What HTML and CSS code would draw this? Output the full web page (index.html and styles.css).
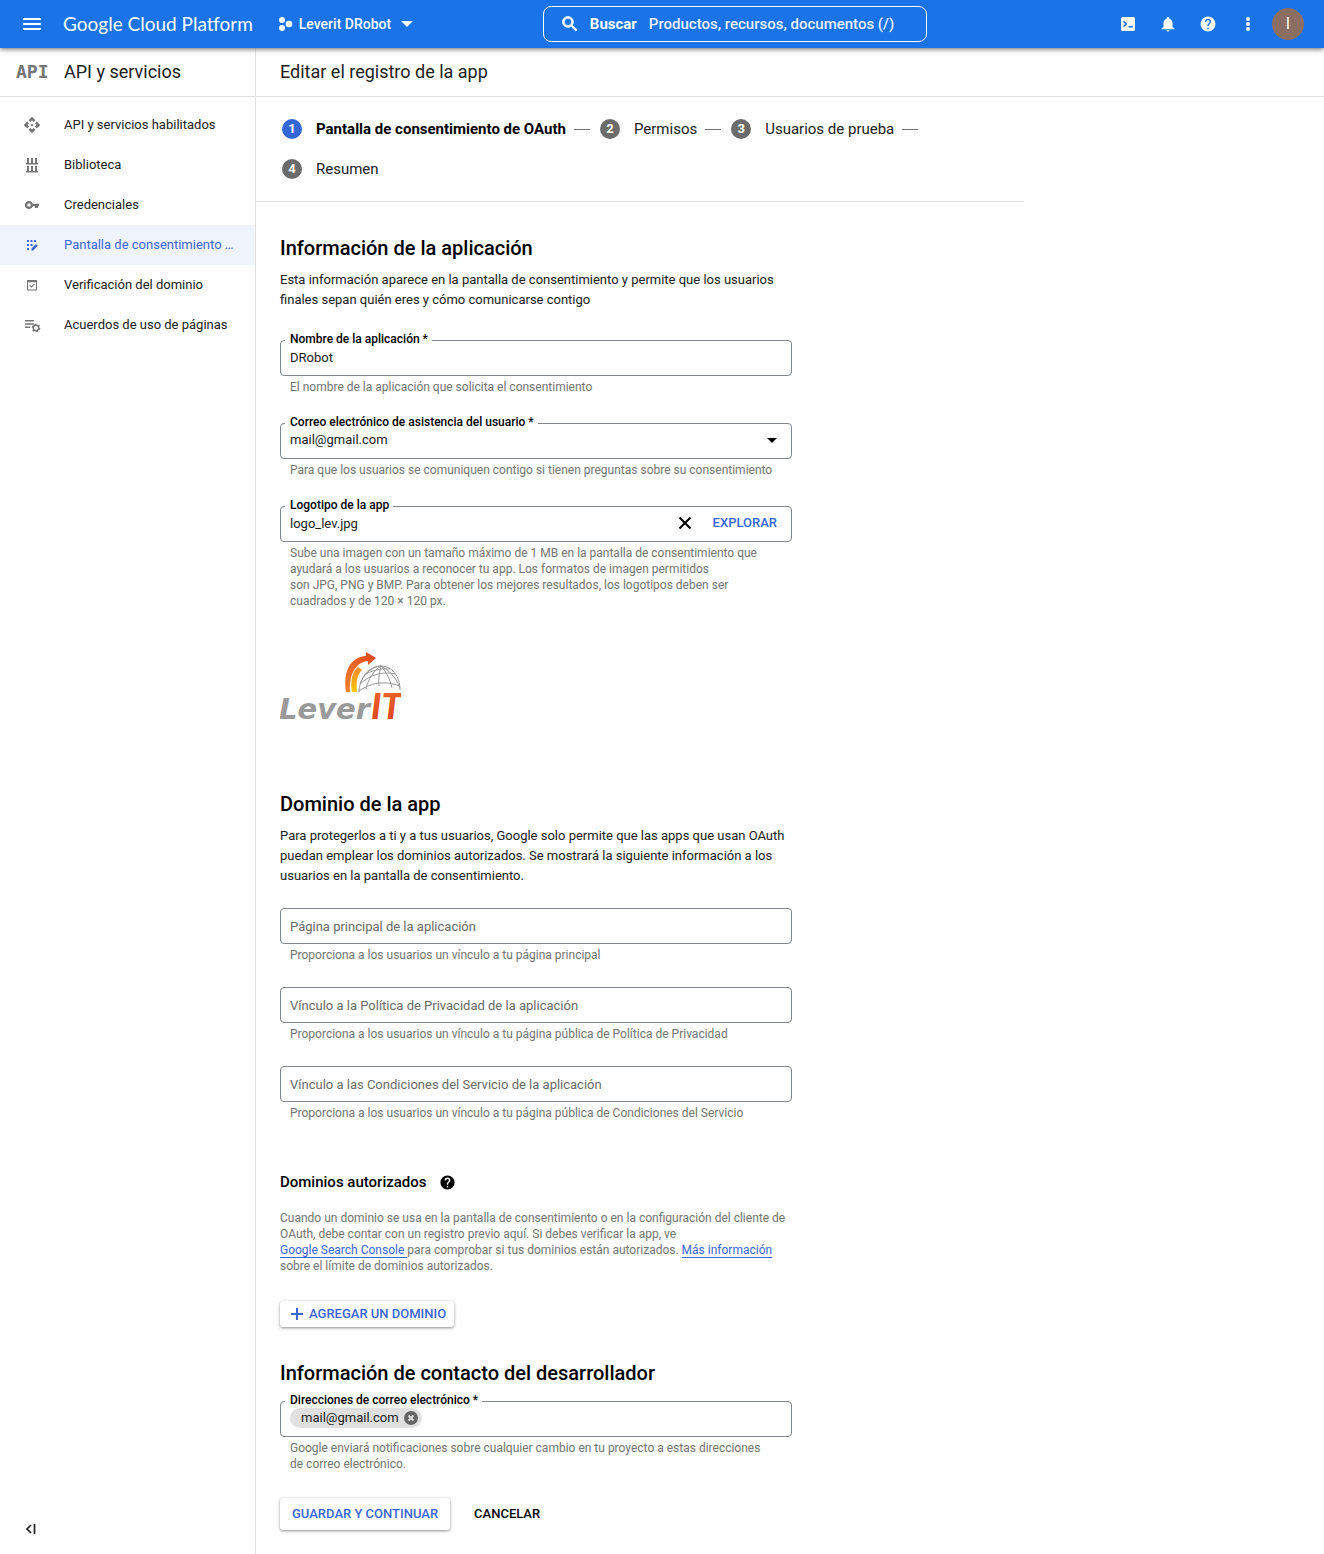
FILE: index.html
```html
<!DOCTYPE html>
<html lang="es">
<head>
    <meta charset="UTF-8">
    <meta name="viewport" content="width=device-width, initial-scale=1.0">
    <title>Editar el registro de la app - API y servicios</title>
    <link rel="stylesheet" href="styles.css">
</head>
<body>
    <header class="topbar">
        <div class="topbar-left">
            <button class="icon-btn menu-btn" aria-label="Menú">
                <svg width="24" height="24" viewBox="0 0 24 24"><path d="M3 18h18v-2H3v2zm0-5h18v-2H3v2zm0-7v2h18V6H3z"/></svg>
            </button>
            <a class="brand" href="#">Google Cloud Platform</a>
            <button class="project">
                <svg width="14" height="16" viewBox="0 0 14 16"><circle cx="3" cy="4" r="3"/><circle cx="3" cy="12" r="3"/><circle cx="10" cy="8" r="3.300"/></svg>
                Leverit DRobot
                <svg class="caret" width="12" height="6" viewBox="0 0 12 6"><path d="M0 0h12L6 6z"/></svg>
            </button>
        </div>
        <label class="search">
            <svg width="20" height="20" viewBox="0 0 24 24"><path stroke="currentColor" d="M15.500 14h-.79l-.28-.27A6.470 6.470 0 0 0 16 9.500 6.500 6.500 0 1 0 9.500 16c1.610 0 3.090-.59 4.230-1.570l.27.28v.79l5 4.990L20.490 19l-4.990-5zm-6 0a4.500 4.500 0 1 1 0-9 4.500 4.500 0 0 1 0 9z"/></svg>
            <span>Buscar</span>
            <input type="text" placeholder="Productos, recursos, documentos (/)">
        </label>
        <div class="topbar-right">
            <button class="icon-btn" aria-label="Cloud Shell">
                <svg width="18" height="18" viewBox="0 0 18 18"><path fill-rule="evenodd" d="M3.500 2h11A1.500 1.500 0 0 1 16 3.500v11a1.500 1.500 0 0 1-1.500 1.500h-11A1.500 1.500 0 0 1 2 14.500v-11A1.500 1.500 0 0 1 3.500 2zM3.500 6.300 6 9l-2.500 2.700h2.200L8.300 9 5.700 6.300zM9.500 11v1.600H14V11z"/></svg>
            </button>
            <button class="icon-btn" aria-label="Notificaciones">
                <svg width="18" height="18" viewBox="0 0 24 24"><path d="M12 22c1.100 0 2-.9 2-2h-4c0 1.100.9 2 2 2zm6-6v-5c0-3.070-1.640-5.640-4.500-6.320V4a1.500 1.500 0 0 0-3 0v.68C7.630 5.360 6 7.920 6 11v5l-2.500 2v1h17v-1z"/></svg>
            </button>
            <button class="icon-btn" aria-label="Ayuda">
                <svg width="18" height="18" viewBox="0 0 24 24"><path d="M12 2a10 10 0 1 0 0 20 10 10 0 0 0 0-20zm1 17h-2v-2h2v2zm2.070-7.750-.9.920C13.450 12.900 13 13.500 13 15h-2v-.5c0-1.100.45-2.100 1.170-2.830l1.240-1.260A2 2 0 1 0 10 9H8a4 4 0 1 1 8 0c0 .88-.36 1.680-.93 2.250z"/></svg>
            </button>
            <button class="icon-btn" aria-label="Más opciones">
                <svg width="18" height="18" viewBox="0 0 18 18"><circle cx="9" cy="4" r="2"/><circle cx="9" cy="9" r="2"/><circle cx="9" cy="14" r="2"/></svg>
            </button>
            <button class="avatar" aria-label="Cuenta">I</button>
        </div>
    </header>

    <div class="layout">
        <aside class="sidebar">
            <div class="sidebar-title"><span class="api-logo">API</span>API y servicios</div>
            <nav>
                <a class="nav-item" href="#">
                    <svg width="18" height="18" viewBox="0 0 24 24"><path d="m14 12-2 2-2-2 2-2 2 2zm-2-6 2.120 2.120 2.500-2.500L12 1 7.380 5.620l2.500 2.500L12 6zm-6 6 2.120-2.120-2.500-2.500L1 12l4.620 4.620 2.500-2.500L6 12zm12 0-2.120 2.120 2.500 2.500L23 12l-4.620-4.620-2.500 2.500L18 12zm-6 6-2.120-2.120-2.500 2.500L12 23l4.620-4.620-2.500-2.500L12 18z"/></svg>
                    <span>API y servicios habilitados</span>
                </a>
                <a class="nav-item" href="#">
                    <svg width="18" height="18" viewBox="0 0 18 18"><path d="M4 2h2v5h2V2h2v5h2V2h2v5h1v1.500H3V7h1zM4 10h2v5h2v-5h2v5h2v-5h2v5h1v1.500H3V15h1z"/></svg>
                    <span>Biblioteca</span>
                </a>
                <a class="nav-item" href="#">
                    <svg width="18" height="18" viewBox="0 0 18 18"><path fill-rule="evenodd" d="M6 5a4 4 0 1 0 3.800 5.200H12V12h3v-1.800h1V7.800H9.800A4 4 0 0 0 6 5zm0 2.200a1.800 1.800 0 1 1 0 3.600 1.800 1.800 0 0 1 0-3.600z"/></svg>
                    <span>Credenciales</span>
                </a>
                <a class="nav-item active" href="#">
                    <svg width="18" height="18" viewBox="0 0 18 18"><path d="M4 4h2v2H4zM7.500 4h2v2h-2zM11 4h2v2h-2zM4 8h2v2H4zM7.500 8h2v2h-2zM4 12h2v2H4zM8.500 14.500v-2L13 8l1.800 1.800-4.600 4.700z"/></svg>
                    <span>Pantalla de consentimiento de OAuth</span>
                </a>
                <a class="nav-item" href="#">
                    <svg width="18" height="18" viewBox="0 0 18 18"><path fill-rule="evenodd" d="M4 4h10v10.500H4zM5 6.200v7.300h8V6.200zM6.300 9.700l.8-.8 1.300 1.300L11 7.600l.8.800-3.400 3.400z"/></svg>
                    <span>Verificación del dominio</span>
                </a>
                <a class="nav-item" href="#">
                    <svg width="18" height="18" viewBox="0 0 18 18"><path d="M2 4h9v1.500H2zM2 7.300h9v1.500H2zM2 10.600h5v1.500H2z"/><circle cx="13" cy="12" r="2.700" fill="none" stroke="currentColor" stroke-width="1.400"/><circle cx="13" cy="12" r="3.700" fill="none" stroke="currentColor" stroke-width="1.200" stroke-dasharray="1.900 1.970"/></svg>
                    <span>Acuerdos de uso de páginas</span>
                </a>
            </nav>
            <button class="collapse" aria-label="Ocultar panel">
                <svg width="12" height="10" viewBox="0 0 12 10"><path d="M6 1 2 5l4 4M9.500 0v10" fill="none" stroke="currentColor" stroke-width="1.700"/></svg>
            </button>
        </aside>

        <main>
            <h1>Editar el registro de la app</h1>
            <ol class="steps">
                <li class="current"><span class="num">1</span>Pantalla de consentimiento de OAuth</li>
                <li><span class="num">2</span>Permisos</li>
                <li><span class="num">3</span>Usuarios de prueba</li>
                <li><span class="num">4</span>Resumen</li>
            </ol>

            <form class="form">
                <section>
                    <h2>Información de la aplicación</h2>
                    <p>Esta información aparece en la pantalla de consentimiento y permite que los usuarios finales sepan quién eres y cómo comunicarse contigo</p>
                    <div class="fields">
                        <div class="field">
                            <label for="app-name">Nombre de la aplicación *</label>
                            <div class="box"><input id="app-name" type="text" value="DRobot"></div>
                            <div class="hint">El nombre de la aplicación que solicita el consentimiento</div>
                        </div>
                        <div class="field">
                            <label for="support">Correo electrónico de asistencia del usuario *</label>
                            <div class="box">
                                <select id="support"><option>mail@gmail.com</option></select>
                                <svg class="arrow" width="10" height="5" viewBox="0 0 10 5"><path d="M0 0h10L5 5z"/></svg>
                            </div>
                            <div class="hint">Para que los usuarios se comuniquen contigo si tienen preguntas sobre su consentimiento</div>
                        </div>
                        <div class="field">
                            <label for="logo">Logotipo de la app</label>
                            <div class="box">
                                <input id="logo" type="text" value="logo_lev.jpg" readonly>
                                <button type="button" class="clear" aria-label="Quitar">
                                    <svg width="14" height="14" viewBox="0 0 14 14"><path d="m1.500 1.500 11 11m0-11-11 11" stroke="currentColor" stroke-width="2"/></svg>
                                </button>
                                <button type="button" class="browse">EXPLORAR</button>
                            </div>
                            <div class="hint">Sube una imagen con un tamaño máximo de 1 MB en la pantalla de consentimiento que ayudará a los usuarios a reconocer tu app. Los formatos de imagen permitidos son&nbsp;JPG,&nbsp;PNG&nbsp;y&nbsp;BMP. Para obtener los mejores resultados, los logotipos deben ser cuadrados y de 120 × 120 px.</div>
                        </div>
                    </div>
                    <svg class="logo" width="121" height="120" viewBox="0 0 121 120" role="img" aria-label="LeverIT">
                        <defs>
                            <linearGradient id="flame" x1="0" y1="1" x2="1" y2="0"><stop offset="0" stop-color="#f0822a"/><stop offset="1" stop-color="#e0451f"/></linearGradient>
                            <linearGradient id="sun" x1="0" y1="1" x2="0" y2="0"><stop offset="0" stop-color="#fdc60b"/><stop offset="1" stop-color="#f2882b"/></linearGradient>
                            <linearGradient id="it" x1="0" y1="0" x2="0" y2="1"><stop offset="0" stop-color="#f06a28"/><stop offset="1" stop-color="#dc3f20"/></linearGradient>
                        </defs>
                        <path d="M66 66C63 46 70 31 86 30l0-4 10 6-8 7v-4C76 36 69 48 70 66z" fill="url(#flame)"/>
                        <path d="M72 66c-2-11 0-20 6-25l4 3c-5 5-6 12-5 22z" fill="url(#sun)"/>
                        <g fill="none" stroke="#999" stroke-width="1">
                            <path d="M79 66c0-11 8-26 22-26 11 0 19 10 19 24"/>
                            <path d="M80 58c10-9 21-13 36-10M79 65c11-8 25-11 41-5M84 49c7-4 16-7 26-6"/>
                            <path d="M101 40c-8 5-13 14-15 23M101 40c-2 8-3 15-2 20M101 40c6 7 9 13 11 22M101 40c8 4 14 10 19 22M101 40c-10 1-17 8-21 18"/>
                        </g>
                        <text class="logo-lever" x="-1" y="93">Lever</text>
                        <text class="logo-it" x="91" y="93" fill="url(#it)">IT</text>
                    </svg>
                </section>

                <section class="domain">
                    <h2>Dominio de la app</h2>
                    <p>Para protegerlos a ti y a tus usuarios, Google solo permite que las apps que usan OAuth puedan emplear los dominios autorizados. Se mostrará la siguiente información a los usuarios en la pantalla de consentimiento.</p>
                    <div class="fields links">
                        <div class="field">
                            <div class="box"><input type="text" aria-label="Página principal" placeholder="Página principal de la aplicación"></div>
                            <div class="hint">Proporciona a los usuarios un vínculo a tu página principal</div>
                        </div>
                        <div class="field">
                            <div class="box"><input type="text" aria-label="Política de Privacidad" placeholder="Vínculo a la Política de Privacidad de la aplicación"></div>
                            <div class="hint">Proporciona a los usuarios un vínculo a tu página pública de Política de Privacidad</div>
                        </div>
                        <div class="field">
                            <div class="box"><input type="text" aria-label="Condiciones del Servicio" placeholder="Vínculo a las Condiciones del Servicio de la aplicación"></div>
                            <div class="hint">Proporciona a los usuarios un vínculo a tu página pública de Condiciones del Servicio</div>
                        </div>
                    </div>
                </section>

                <section class="authorized">
                    <h3>Dominios autorizados
                        <svg width="17" height="17" viewBox="0 0 24 24"><path d="M12 2a10 10 0 1 0 0 20 10 10 0 0 0 0-20zm1 17h-2v-2h2v2zm2.070-7.750-.9.920C13.450 12.900 13 13.500 13 15h-2v-.5c0-1.100.45-2.100 1.170-2.830l1.240-1.260A2 2 0 1 0 10 9H8a4 4 0 1 1 8 0c0 .88-.36 1.680-.93 2.250z"/></svg>
                    </h3>
                    <p class="small">Cuando un dominio se usa en la pantalla de consentimiento o en la configuración del cliente de OAuth, debe contar con un registro previo aquí. Si debes verificar la app, ve <a href="#">Google&nbsp;Search&nbsp;Console </a>para comprobar si tus dominios están autorizados. <a href="#">Más información</a> sobre el límite de dominios autorizados.</p>
                    <button type="button" class="raised add">
                        <svg width="12" height="12" viewBox="0 0 12 12"><path d="M6 0v12M0 6h12" stroke="currentColor" stroke-width="2"/></svg>
                        AGREGAR UN DOMINIO
                    </button>
                </section>

                <section class="contact">
                    <h2>Información de contacto del desarrollador</h2>
                    <div class="field">
                        <label for="emails">Direcciones de correo electrónico *</label>
                        <div class="box">
                            <span class="chip">mail@gmail.com
                                <button type="button" aria-label="Quitar mail@gmail.com">
                                    <svg width="14" height="14" viewBox="0 0 14 14"><circle cx="7" cy="7" r="7" fill="#666"/><path d="m4.500 4.500 5 5m0-5-5 5" stroke="#e0e0e0" stroke-width="1.800"/></svg>
                                </button>
                            </span>
                            <input id="emails" type="text">
                        </div>
                        <div class="hint">Google enviará notificaciones sobre cualquier cambio en tu proyecto a estas direcciones de correo electrónico.</div>
                    </div>
                </section>

                <div class="actions">
                    <button type="submit" class="raised">GUARDAR Y CONTINUAR</button>
                    <button type="button" class="flat">CANCELAR</button>
                </div>
            </form>
        </main>
    </div>
</body>
</html>
```
FILE: styles.css
```css
* { box-sizing: border-box; }
body { margin: 0; min-height: 100vh; display: flex; flex-direction: column; font: 13px/20px Roboto, Arial, sans-serif; color: #212121; background: #fefefe; }
button, input, select { font: inherit; color: inherit; background: none; border: none; padding: 0; margin: 0; }
button { cursor: pointer; }
svg { fill: currentColor; flex: none; display: block; }
h1, h2, h3, p { margin: 0; }

/* top bar */
.topbar { display: grid; grid-template-columns: 41fr 29fr 30fr; align-items: center; height: 48px; background: #1a73e8; color: #fff; box-shadow: 0 1px 5px rgba(0, 0, 0, 0.6); position: relative; }
.topbar-left, .topbar-right { display: flex; align-items: center; }
.topbar-right { justify-content: flex-end; padding-right: 20px; }
.icon-btn { width: 40px; height: 40px; display: flex; align-items: center; justify-content: center; }
.menu-btn { margin: 0 11px 0 12px; }
.brand { color: #fff; text-decoration: none; font: 19px/24px Lato, sans-serif; }
.project { display: flex; align-items: center; gap: 6px; margin-left: 26px; font-size: 14px; font-weight: 500; }
.caret { margin-left: 4px; }
.search { display: flex; align-items: center; height: 36px; padding: 0 16px; border: 1px solid #fff; border-radius: 8px; font-size: 15px; }
.search span { font-weight: 700; margin: 0 12px 0 10px; }
.search input { flex: 1; min-width: 0; outline: none; font-weight: 500; }
.search input::placeholder { color: #e8f0fe; opacity: 1; }
.avatar { width: 32px; height: 32px; border-radius: 50%; margin-left: 4px; background: #8d6e63; font-size: 16px; }

/* sidebar */
.layout { flex: 1; display: flex; }
.sidebar { width: 256px; flex: none; border-right: 1px solid #e0e0e0; display: flex; flex-direction: column; }
.sidebar-title { height: 49px; display: flex; align-items: center; padding-left: 16px; border-bottom: 1px solid #e0e0e0; font-size: 18px; }
.api-logo { width: 48px; font: bold 18px/24px "DejaVu Sans Mono", monospace; color: #757575; }
.sidebar nav { padding-top: 8px; }
.nav-item { display: flex; align-items: center; gap: 23px; height: 40px; padding: 0 20px 0 23px; color: inherit; text-decoration: none; }
.nav-item svg { color: #757575; }
.nav-item span { overflow: hidden; text-overflow: ellipsis; white-space: nowrap; }
.nav-item.active { background: #eff3fc; color: #3b66d6; }
.nav-item.active svg { color: inherit; }
.collapse { margin: auto 0 20px 25px; align-self: flex-start; }

/* content */
main { flex: 1; min-width: 0; }
h1 { height: 49px; padding-left: 24px; border-bottom: 1px solid #e0e0e0; font-size: 18px; font-weight: 400; line-height: 48px; }
.steps { max-width: 768px; margin: 0; padding: 12px 24px; list-style: none; display: flex; flex-wrap: wrap; border-bottom: 1px solid #e0e0e0; font-size: 15px; }
.steps li { display: flex; align-items: center; height: 40px; padding: 0 8px 0 2px; }
.steps li:not(:last-child)::after { content: ""; width: 16px; height: 1px; margin-left: 8px; background: #757575; }
.steps .current { font-weight: 700; color: #000; }
.num { width: 20px; height: 20px; margin-right: 14px; border-radius: 50%; background: #6b6b6b; color: #fff; font-size: 13px; font-weight: 700; text-align: center; }
.current .num { background: #3367d6; }

.form { max-width: 560px; padding: 34px 24px 24px; }
h2 { font-size: 20px; font-weight: 500; line-height: 24px; color: #000; margin-bottom: 10px; }
h3 { display: flex; align-items: center; gap: 12px; font-size: 15px; font-weight: 500; color: #000; }

.fields { display: flex; flex-direction: column; gap: 28px; margin-top: 30px; }
.fields.links { gap: 24px; margin-top: 22px; }
.field { position: relative; }
.field label { position: absolute; top: -9px; left: 5px; padding: 0 4px 0 5px; background: #fefefe; font-size: 12px; font-weight: 500; line-height: 16px; color: #000; }
.box { display: flex; align-items: center; height: 36px; padding: 0 9px; border: 1px solid #80868b; border-radius: 4px; }
.field label + .box { padding-bottom: 2px; }
.box input, .box select { flex: 1; min-width: 0; height: 32px; outline: none; appearance: none; }
.box input::placeholder { color: #6b6b6b; opacity: 1; }
.arrow { margin-right: 5px; color: #000; }
.clear { color: #000; margin-right: 21px; }
.browse { color: #3b66d6; font-weight: 500; margin-right: 5px; }
.hint { margin-top: 3px; padding: 0 18px 0 10px; font-size: 12px; line-height: 16px; color: #757575; }

.logo { margin: 17px 0 46px; }
.logo-lever { font: italic bold 29px "DejaVu Sans", sans-serif; fill: #9a9a9a; }
.logo-it { font: italic 900 36px Lato, sans-serif; }

.authorized { margin-top: 51px; }
.small { margin: 18px 0 27px; font-size: 12px; line-height: 16px; color: #757575; }
.small a { color: #3b66d6; text-decoration: none; border-bottom: 1px solid #3b66d6; }
.raised { height: 32px; padding: 0 12px; border-radius: 3px; background: #fff; color: #3b66d6; font-weight: 500; box-shadow: 0 1px 3px rgba(0, 0, 0, 0.45); }
.add { display: flex; align-items: center; gap: 6px; height: 26px; padding: 0 8px 0 11px; }
.contact { margin-top: 34px; }
.contact .field { margin-top: 16px; }
.chip { display: flex; align-items: center; gap: 5px; height: 20px; padding: 0 4px 0 11px; border-radius: 10px; background: #e0e0e0; }
.actions { display: flex; gap: 24px; margin-top: 26px; }
.flat { color: #000; font-weight: 500; }
```
